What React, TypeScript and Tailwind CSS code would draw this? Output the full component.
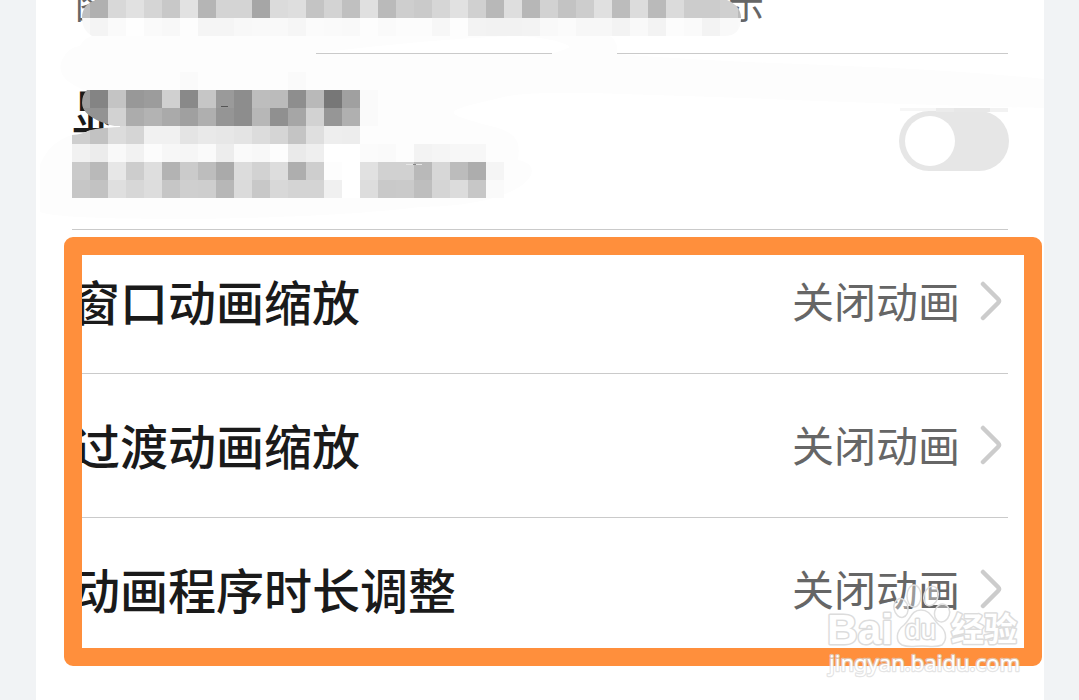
import React from "react";

const CELL = 18;

type MosaicRow = { x: number; y: number; tones: string };

const topRows: MosaicRow[] = [
  { x: 72, y: 0, tones: "bf b0 d8 e1 d5 c8 e2 b5 d4 d4 a6 db de c4 d3 c0 e0 ba ce ca d6 e1 d0 b8 de b7 d2 c3 cd e0 bc dc ba db cc cc d0 bb" },
  { x: 72, y: 18, tones: "f9 f4 fa fe fa f8 fd f5 f5 f8 f9 f9 f6 fb fa f9 fd fa fc fc f7 fd f3 f2 f2 f3 f9 fb f7 f7 f3 f9 f3 fc fa f3 f9 fa" },
];

const titleRows: MosaicRow[] = [
  { x: 72, y: 90, tones: "9e 84 c4 98 9c d0 89 c6 9a 8d bd bb 8e b9 77 a0 fa" },
  { x: 72, y: 108, tones: "96 93 d2 ac b3 aa a0 af 95 8d b7 90 a6 d2 96 b0 fa" },
];

const detailRows: MosaicRow[] = [
  { x: 180, y: 72, tones: "fa" },
  { x: 288, y: 72, tones: "fa" },
  { x: 72, y: 126, tones: "ce c2 dc d5 f1 f1 e4 e9 e7 e4 dc d5 c4 df ee ed" },
  { x: 72, y: 144, tones: "f1 ec f9 f2 fc f7 f6 fa ed fa f8 fd ea ef ff ff fb fa fd f3 f5 f7 f7" },
  { x: 72, y: 162, tones: "ca b9 e7 cd de b3 cb bd aa dc d2 dd ae ce fd ff e1 d1 d1 b9 d7 bc ad f5" },
  { x: 72, y: 180, tones: "c6 c2 df d7 dd c6 cf ce b7 db c8 d8 d4 d4 f0 ff dd c9 ca be d5 dc c7 fa" },
];

function Mosaic({ rows }: { rows: MosaicRow[] }) {
  return (
    <>
      {rows.map((row) =>
        row.tones.split(" ").map((t, i) => (
          <rect
            key={`${row.x}-${row.y}-${i}`}
            x={row.x + i * CELL}
            y={row.y}
            width={CELL}
            height={CELL}
            fill={`#${t}${t}${t}`}
            shapeRendering="crispEdges"
          />
        ))
      )}
    </>
  );
}

function Redaction() {
  return (
    <svg className="pointer-events-none absolute left-0 top-0" width="1079" height="230" viewBox="0 0 1079 230">
      <defs>
        <clipPath id="topStroke">
          <path d="M96 0H727Q741 6 741 18Q741 36 724 36H92Q82 30 82 18Q82 4 96 0Z" />
        </clipPath>
        <clipPath id="titleStroke">
          <path d="M87 90H378V126H360V127H119L108 124.500Q82 116 82 103Q82 95 87 90Z" />
        </clipPath>
        <clipPath id="detailStroke">
          <path d="M72 60H520V200H72V135Q83 134 88 131Q94 128 120 127V60Z" />
        </clipPath>
      </defs>
      <path d="M92 36H610Q617 40 617 49V54C760 66 900 64 1044 79V108C900 105 760 98 622 94C570 92 520 92 500 98C440 112 440 112 490 126C520 132 520 145 518 160C550 165 530 206 420 207C300 222 60 222 40 212V165C46 150 56 140 72 135Q83 134 88 131L119 127L87 90H84C70 84 56 76 62 60Q68 47 80 46Q84 38 92 36Z" fill="#fdfdfd" />
      <path d="M316 53C390 44 470 37 520 36Q560 39 570 47Q560 52 552 53Z" fill="#fff" />
      <path d="M316 53.500H552" stroke="#cacaca" />
      <g clipPath="url(#topStroke)"><Mosaic rows={topRows} /></g>
      <g clipPath="url(#detailStroke)"><Mosaic rows={detailRows} /></g>
      <g clipPath="url(#titleStroke)"><Mosaic rows={titleRows} /></g>
      <path d="M221 106.500h7" stroke="#555" />
      <path d="M406 164.500h16" stroke="#e5e5e5" />
      <path d="M413 164.500h3" stroke="#888" />
      <g shapeRendering="crispEdges">
        <rect x="900" y="108" width="36" height="3" fill="#f6f6f6" />
        <rect x="936" y="108" width="18" height="4" fill="#ebebeb" />
        <rect x="954" y="108" width="36" height="4" fill="#e7e7e7" />
        <rect x="990" y="108" width="18" height="4" fill="#f2f2f2" />
      </g>
    </svg>
  );
}

function SettingRow({ label, value }: { label: string; value: string }) {
  return (
    <div className="flex h-36 shrink-0 items-center border-b border-[#cacaca]">
      <span className="flex-1 pb-1 text-[48px] font-medium leading-none text-[#1a1a1a]">{label}</span>
      <span className="pb-1 text-[42px] leading-none text-[#666]">{value}</span>
      <svg className="mb-px ml-[18px] mr-1.5" width="24" height="42" viewBox="0 0 24 42" fill="none">
        <path d="M5 4L20 19Q22 21 20 23L5 38" stroke="#cccccc" strokeWidth="4.500" strokeLinecap="round" strokeLinejoin="round" />
      </svg>
    </div>
  );
}

function Watermark() {
  return (
    <svg className="absolute left-[810px] top-[570px]" width="230" height="120" viewBox="810 570 230 120">
      <g fill="#fff" fillOpacity="0.35" stroke="#dedede" strokeWidth="1.500">
        <ellipse cx="901" cy="608" rx="7" ry="9.500" transform="rotate(-12 901 608)" />
        <ellipse cx="914" cy="596" rx="7" ry="11" />
        <ellipse cx="931" cy="596" rx="7" ry="10" transform="rotate(16 931 596)" />
        <ellipse cx="942" cy="613" rx="7.500" ry="9" transform="rotate(16 942 613)" />
      </g>
      <path d="M921 610C911 610 911 619 904 625C896 631 895 641 902 645C909 648 915 646 922 646C929 646 935 648 942 645C948 639 946 630 939 625C932 619 931 610 921 610Z" fill="#fff" stroke="#dedede" strokeWidth="1.500" />
      <g fill="#fff" stroke="#dcdcdc" strokeWidth="3" paintOrder="stroke" strokeLinejoin="round">
        <text x="827" y="644" fontSize="42" fontWeight="700" textLength="66" lengthAdjust="spacingAndGlyphs" className="font-['Liberation_Sans',sans-serif]">Bai</text>
        <text x="905" y="639" fontSize="28" fontWeight="400" textLength="31" lengthAdjust="spacingAndGlyphs" className="font-['Liberation_Sans',sans-serif]">du</text>
        <text x="951" y="641" fontSize="33" fontWeight="700" textLength="66" className="font-['Noto_Sans_CJK_SC',sans-serif]">经验</text>
      </g>
      <text x="829" y="671" fontSize="22" textLength="191" fill="#fff" stroke="#d8d8d8" strokeOpacity="0.7" strokeWidth="2.500" strokeLinejoin="round" paintOrder="stroke" className="font-['Noto_Sans',sans-serif]">jingyan.baidu.com</text>
    </svg>
  );
}

export default function App() {
  return (
    <div className="relative flex h-[700px] w-[1079px] justify-center overflow-hidden bg-[#f1f3f5] pr-px font-['Noto_Sans_CJK_SC',sans-serif]">
      <main className="-mr-[2px] flex h-full w-[1008px] flex-col bg-white px-9">
        <div className="flex h-[54px] shrink-0 items-start justify-between border-b border-[#cacaca] pl-[3px] pr-[244px] text-[36px] leading-none text-[#666]">
          <span className="-mt-[15px]">图</span>
          <span className="-mt-[15px]">示</span>
        </div>
        <div className="flex h-44 shrink-0 items-center justify-between border-b border-[#cacaca]">
          <span className="-mt-[66px] text-[48px] font-medium leading-none text-[#1a1a1a]">显</span>
          <div role="switch" aria-checked="false" className="-mr-px mb-0.5 flex h-[60px] w-[110px] items-center rounded-full bg-[#e6e6e6] pl-1.5">
            <div className="size-[50px] rounded-full bg-white" />
          </div>
        </div>
        <SettingRow label="窗口动画缩放" value="关闭动画" />
        <SettingRow label="过渡动画缩放" value="关闭动画" />
        <SettingRow label="动画程序时长调整" value="关闭动画" />
      </main>
      <Redaction />
      <div className="pointer-events-none absolute left-16 top-[237px] h-[429px] w-[978px] rounded-[9px] border-[18px] border-[#ff8f3c]" />
      <Watermark />
    </div>
  );
}
